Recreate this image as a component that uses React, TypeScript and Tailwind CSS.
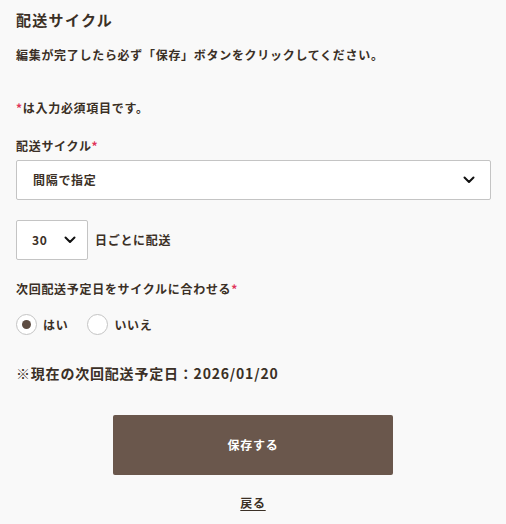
import React, { useState } from "react";

const font = { fontFamily: '"Noto Sans CJK JP", "Noto Sans", sans-serif' };

function Chevron() {
  return (
    <svg width="12" height="8" viewBox="0 0 12 8" fill="none">
      <path d="M1.5 1.5l4.5 4.5 4.5-4.5" stroke="#111" strokeWidth="2" strokeLinecap="round" strokeLinejoin="round" />
    </svg>
  );
}

export default function App() {
  const [yes, setYes] = useState(true);
  return (
    <div className="min-h-[524px] w-[506px] bg-[#f9f9f9] text-[#3b3026] px-4" style={font}>
      <h1 className="pt-[9px] text-[15px] font-bold tracking-[1.3px] leading-[22px]">配送サイクル</h1>
      <p className="mt-[15px] text-[12px] font-bold tracking-[0.7px] leading-[18px]">
        編集が完了したら必ず「保存」ボタンをクリックしてください。
      </p>
      <p className="mt-[35px] text-[12px] font-bold tracking-[0.7px] leading-[18px]">
        <span className="text-[#e0355a]">*</span>は入力必須項目です。
      </p>
      <p className="mt-[20px] text-[12px] font-bold tracking-[0.7px] leading-[18px]">
        配送サイクル<span className="text-[#e0355a]">*</span>
      </p>
      <div className="mt-[5px] h-[40px] w-[475px] bg-white border border-[#c4c4c4] rounded-[2px] flex items-center justify-between pl-4 pr-[15px]">
        <span className="text-[12px] font-bold tracking-[0.7px]">間隔で指定</span>
        <Chevron />
      </div>
      <div className="mt-[20px] flex items-center gap-[7px]">
        <div className="h-[40px] w-[72px] bg-white border border-[#c4c4c4] rounded-[2px] flex items-center pl-[15px] gap-[16px]">
          <span className="text-[12px] font-bold tracking-[0.7px]">30</span>
          <Chevron />
        </div>
        <span className="text-[12px] font-bold tracking-[0.7px]">日ごとに配送</span>
      </div>
      <p className="mt-[20px] text-[12px] font-bold tracking-[0.7px] leading-[18px]">
        次回配送予定日をサイクルに合わせる<span className="text-[#e0355a]">*</span>
      </p>
      <div className="mt-[16px] flex items-center gap-[19px]">
        <button className="flex items-center gap-[6px]" onClick={() => setYes(true)}>
          <span className="h-[21px] w-[21px] rounded-full border border-[#c4c4c4] bg-white flex items-center justify-center">
            {yes && <span className="h-[9px] w-[9px] rounded-full bg-[#5e4d43]" />}
          </span>
          <span className="text-[12px] font-bold tracking-[0.7px]">はい</span>
        </button>
        <button className="flex items-center gap-[6px]" onClick={() => setYes(false)}>
          <span className="h-[21px] w-[21px] rounded-full border border-[#c4c4c4] bg-white flex items-center justify-center">
            {!yes && <span className="h-[9px] w-[9px] rounded-full bg-[#5e4d43]" />}
          </span>
          <span className="text-[12px] font-bold tracking-[0.7px]">いいえ</span>
        </button>
      </div>
      <p className="mt-[27px] text-[14px] font-bold tracking-[0.8px] leading-[22px]">
        ※現在の次回配送予定日：2026/01/20
      </p>
      <div className="mt-[31px] flex justify-center">
        <button className="h-[60px] w-[280px] rounded-[2px] bg-[#6a574c] text-white text-[12px] font-bold tracking-[0.7px]">
          保存する
        </button>
      </div>
      <div className="mt-[19px] flex justify-center">
        <a className="text-[12px] font-bold tracking-[0.7px] underline underline-offset-2 text-[#3b3026]">戻る</a>
      </div>
    </div>
  );
}
